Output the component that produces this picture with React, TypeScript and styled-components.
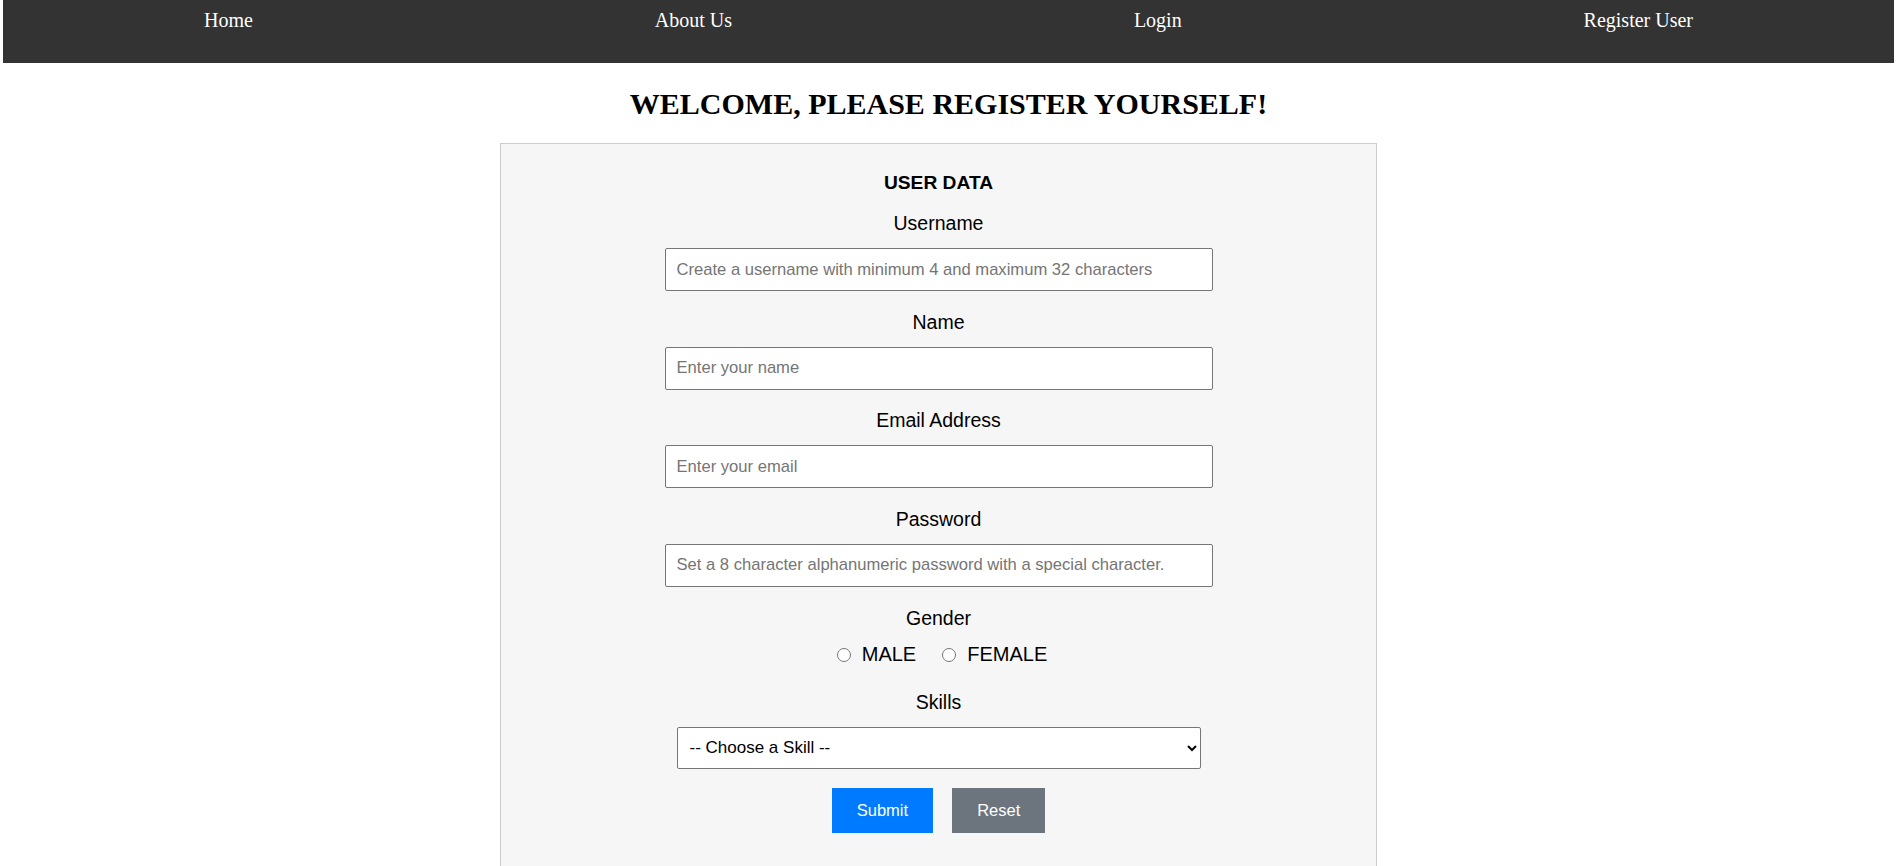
import React from "react";
import styled, { createGlobalStyle } from "styled-components";

const GlobalStyle = createGlobalStyle`
  html, body {
    margin: 0;
    padding: 0;
    background: #ffffff;
  }
  body {
    font-family: "Liberation Serif", "Times New Roman", serif;
    overflow: hidden;
  }
  * { box-sizing: border-box; }
`;

const NavBar = styled.nav`
  margin: 0 3px;
  height: 63px;
  background: #333333;
  display: flex;
  justify-content: space-around;
  align-items: flex-start;
  padding-top: 5px;
`;

const NavLink = styled.a`
  color: #ffffff;
  text-decoration: none;
  font-family: "Liberation Serif", "Times New Roman", serif;
  font-size: 20px;
  line-height: 31px;
`;

const Title = styled.h1`
  margin: 24px 0 22px;
  text-align: center;
  font-family: "Liberation Serif", "Times New Roman", serif;
  font-weight: bold;
  font-size: 30px;
  line-height: 34px;
  color: #000;
`;

const Main = styled.main`
  display: flex;
  justify-content: center;
  padding-right: 20px;
`;

const Card = styled.form`
  width: 877px;
  background: #f6f6f6;
  border: 1px solid #cccccc;
  padding: 28px 0 60px;
  display: flex;
  flex-direction: column;
  align-items: center;
  font-family: "Liberation Sans", Arial, sans-serif;
  color: #000;
`;

const SectionTitle = styled.h3`
  margin: 0 0 18px;
  font-size: 19.2px;
  line-height: 22px;
  font-weight: bold;
`;

const Field = styled.div<{ $after?: number }>`
  display: flex;
  flex-direction: column;
  align-items: center;
  margin-bottom: ${(p) => (p.$after ?? 19.5)}px;
`;

const Label = styled.label<{ $below?: number }>`
  display: block;
  font-size: 19.5px;
  line-height: 22px;
  margin-bottom: ${(p) => p.$below ?? 14}px;
`;

const TextInput = styled.input`
  width: 548px;
  height: 43px;
  padding: 0 11px;
  border: 1px solid #767676;
  border-radius: 2px;
  background: #fff;
  font-family: "Liberation Sans", Arial, sans-serif;
  font-size: 16.6px;
  color: #000;
  &::placeholder {
    color: #757575;
  }
`;

const RadioRow = styled.div`
  display: flex;
  align-items: center;
  height: 22px;
  padding-left: 7px;
  font-size: 20px;
`;

const RadioOption = styled.label<{ $gap?: number }>`
  display: flex;
  align-items: center;
  margin-right: ${(p) => p.$gap ?? 0}px;
`;

const Radio = styled.input`
  margin: 0 11px 0 0;
  width: 14px;
  height: 14px;
`;

const Select = styled.select`
  width: 524px;
  height: 42px;
  padding: 0 8px;
  border: 1px solid #767676;
  border-radius: 2px;
  background: #fff;
  font-family: "Liberation Sans", Arial, sans-serif;
  font-size: 17px;
  color: #000;
`;

const Buttons = styled.div`
  display: flex;
  gap: 19px;
`;

const Button = styled.button<{ $variant: "primary" | "secondary" }>`
  height: 45px;
  padding: 0 25px;
  border: none;
  border-radius: 0;
  font-family: "Liberation Sans", Arial, sans-serif;
  font-size: 16.5px;
  color: #fff;
  cursor: pointer;
  background: ${(p) => (p.$variant === "primary" ? "#007bff" : "#6c757d")};
`;

export default function App() {
  return (
    <>
      <GlobalStyle />
      <NavBar>
        <NavLink href="#">Home</NavLink>
        <NavLink href="#">About Us</NavLink>
        <NavLink href="#">Login</NavLink>
        <NavLink href="#">Register User</NavLink>
      </NavBar>
      <Title>WELCOME, PLEASE REGISTER YOURSELF!</Title>
      <Main>
        <Card onSubmit={(e) => e.preventDefault()}>
          <SectionTitle>USER DATA</SectionTitle>
          <Field>
            <Label htmlFor="username">Username</Label>
            <TextInput
              id="username"
              placeholder="Create a username with minimum 4 and maximum 32 characters"
            />
          </Field>
          <Field>
            <Label htmlFor="name">Name</Label>
            <TextInput id="name" placeholder="Enter your name" />
          </Field>
          <Field>
            <Label htmlFor="email">Email Address</Label>
            <TextInput id="email" placeholder="Enter your email" />
          </Field>
          <Field $after={20}>
            <Label htmlFor="password">Password</Label>
            <TextInput
              id="password"
              type="password"
              placeholder="Set a 8 character alphanumeric password with a special character."
            />
          </Field>
          <Field $after={25}>
            <Label as="span" $below={15}>Gender</Label>
            <RadioRow>
              <RadioOption $gap={26}>
                <Radio type="radio" name="gender" value="male" />
                MALE
              </RadioOption>
              <RadioOption>
                <Radio type="radio" name="gender" value="female" />
                FEMALE
              </RadioOption>
            </RadioRow>
          </Field>
          <Field>
            <Label htmlFor="skills">Skills</Label>
            <Select id="skills" defaultValue="">
              <option value="">-- Choose a Skill --</option>
              <option value="html">HTML</option>
              <option value="css">CSS</option>
              <option value="js">JavaScript</option>
            </Select>
          </Field>
          <Buttons>
            <Button type="submit" $variant="primary">Submit</Button>
            <Button type="reset" $variant="secondary">Reset</Button>
          </Buttons>
        </Card>
      </Main>
    </>
  );
}
